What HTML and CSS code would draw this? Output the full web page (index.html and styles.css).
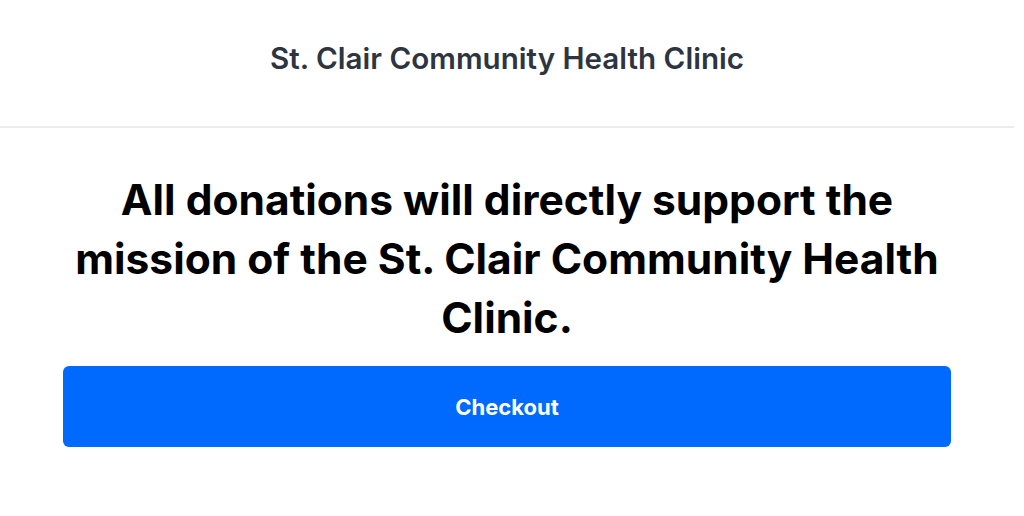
FILE: index.html
```html
<!DOCTYPE html>
<html lang="en">
<head>
<meta charset="utf-8">
<title>St. Clair Community Health Clinic</title>
<link rel="stylesheet" href="styles.css">
</head>
<body>
<div class="page">
  <header class="site-header">
    <h1 class="site-title">St. Clair Community Health Clinic</h1>
  </header>
  <main class="content">
    <h2 class="mission">All donations will directly support the mission of the St. Clair Community Health Clinic.</h2>
    <button class="checkout" type="button">Checkout</button>
  </main>
</div>
</body>
</html>
```

FILE: styles.css
```css
* { box-sizing: border-box; }
html, body { margin: 0; padding: 0; background: #fff; }
body {
  font-family: Inter, "Noto Sans", "Liberation Sans", sans-serif;
  color: #000;
}
.page { padding-right: 10px; }
.site-header {
  height: 128px;
  border-bottom: 2px solid #ececec;
  display: flex;
  justify-content: center;
  padding-top: 40px;
}
.site-title {
  margin: 0;
  font-size: 29.6px;
  line-height: 36px;
  font-weight: 600;
  color: #2d3640;
}
.content {
  max-width: 888px;
  margin: 0 auto;
  padding-top: 42px;
  display: flex;
  flex-direction: column;
  align-items: stretch;
}
.mission {
  margin: 0 0 19px;
  text-align: center;
  font-size: 42.5px;
  line-height: 59px;
  font-weight: 700;
  padding: 0 6px;
}
.checkout {
  height: 81px;
  border: none;
  border-radius: 6px;
  background: #006aff;
  color: #fff;
  font-family: inherit;
  font-size: 22px;
  font-weight: 700;
  cursor: pointer;
}
```
